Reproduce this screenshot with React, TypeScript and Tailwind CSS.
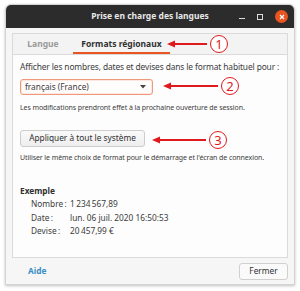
import React from "react";

function Callout({ n, len }: { n: string; len: number }) {
  return (
    <div className="flex items-center">
      <svg width={len} height="8" viewBox={`0 0 ${len} 8`} className="shrink-0">
        <line x1="4" y1="4" x2={len} y2="4" stroke="#e0191d" strokeWidth="2" />
        <polygon points="0,4 8,0.5 8,7.5" fill="#e0191d" />
      </svg>
      <div className="ml-[3px] flex h-[18px] w-[18px] items-center justify-center rounded-full border-[1.5px] border-[#e0191d] bg-white text-[13px] leading-none text-[#e0191d]">
        {n}
      </div>
    </div>
  );
}

export default function App() {
  return (
    <div
      className="relative h-[291px] w-[300px] bg-white"
      style={{ fontFamily: '"Noto Sans", "DejaVu Sans", sans-serif' }}
    >
      <div className="absolute left-[5px] top-[4px] flex h-[281px] w-[290px] flex-col overflow-hidden rounded-t-[6px] border border-[#d4d4d4] bg-[#f6f6f6] shadow-[0_1px_3px_rgba(0,0,0,0.25)]">
        {/* title bar */}
        <div className="relative flex h-[23px] shrink-0 items-center justify-center bg-[#2c2c2c]">
          <span className="text-[8.5px] font-bold text-[#e8e8e8]">Prise en charge des langues</span>
          <div className="absolute right-[6px] top-0 flex h-full items-center gap-[12px]">
            <div className="mt-[4px] h-[1px] w-[6px] bg-[#dcdcdc]" />
            <div className="h-[6px] w-[6px] border border-[#dcdcdc]" />
            <div className="flex h-[13px] w-[13px] items-center justify-center rounded-full bg-[#e95420]">
              <svg width="6" height="6" viewBox="0 0 6 6">
                <path d="M1 1L5 5M5 1L1 5" stroke="#fff" strokeWidth="1.2" />
              </svg>
            </div>
          </div>
        </div>

        {/* notebook */}
        <div className="mx-[6px] mt-[5px] flex h-[225px] flex-col border border-[#dadada] bg-[#fdfdfd]">
          <div className="flex h-[21px] shrink-0 items-stretch border-b border-[#dadada] bg-[#f3f3f3] text-[8.5px]">
            <div className="flex w-[60px] items-center justify-center font-bold text-[#9a9a9a]">Langue</div>
            <div className="flex w-[97px] items-center justify-center border-b-2 border-[#e95420] pt-[2px] font-bold text-[#303030]">
              Formats régionaux
            </div>
          </div>

          <div className="flex flex-col px-[7px] text-[#3c3c3c]">
            <div className="mt-[6px] text-[8.4px] leading-[12px] tracking-[-0.12px]">
              Afficher les nombres, dates et devises dans le format habituel pour :
            </div>
            <div className="mt-[6px] flex h-[16px] w-[133px] items-center justify-between rounded-[3px] border border-[#ee9a7a] bg-[#fffdfc] px-[4px] text-[8.3px] shadow-[inset_0_0_0_1px_rgba(233,84,32,0.12)]">
              <span>français (France)</span>
              <svg width="6" height="4" viewBox="0 0 6 4" className="mr-[2px]">
                <path d="M0 0H6L3 3.5Z" fill="#444" />
              </svg>
            </div>
            <div className="mt-[8px] text-[7px] leading-[10px] tracking-[-0.08px]">
              Les modifications prendront effet à la prochaine ouverture de session.
            </div>
            <div className="mt-[17px] flex h-[17px] w-[125px] items-center justify-center rounded-[3px] border border-[#cdcdcd] bg-gradient-to-b from-[#fafafa] to-[#eeeeee] text-[8.3px] text-[#303030]">
              Appliquer à tout le système
            </div>
            <div className="mt-[6px] text-[7px] leading-[10px] tracking-[-0.08px]">
              Utiliser le même choix de format pour le démarrage et l'écran de connexion.
            </div>

            <div className="mt-[22px] text-[8.3px] font-bold leading-[12px] text-[#303030]">Exemple</div>
            <div className="ml-[11px] mt-[1px] grid grid-cols-[39px_1fr] gap-y-[1px] text-[8.3px] leading-[12.5px]">
              <span>Nombre{"\u202f"}:</span>
              <span>1{"\u202f"}234{"\u202f"}567,89</span>
              <span>Date{"\u202f"}:</span>
              <span>lun. 06 juil. 2020 16:50:53</span>
              <span>Devise{"\u202f"}:</span>
              <span>20{"\u202f"}457,99 €</span>
            </div>
          </div>
        </div>

        {/* footer */}
        <div className="mx-[6px] flex flex-1 items-center justify-between">
          <span className="ml-[16px] text-[8.3px] font-bold text-[#3a8fc8]">Aide</span>
          <div className="flex h-[17px] w-[49px] items-center justify-center rounded-[3px] border border-[#d0d0d0] bg-[#fafafa] text-[8.3px] text-[#303030]">
            Fermer
          </div>
        </div>
      </div>

      {/* annotations */}
      <div className="absolute left-[167px] top-[35px]">
        <Callout n="1" len={40} />
      </div>
      <div className="absolute left-[163px] top-[77px]">
        <Callout n="2" len={55} />
      </div>
      <div className="absolute left-[152px] top-[131px]">
        <Callout n="3" len={54} />
      </div>
    </div>
  );
}
